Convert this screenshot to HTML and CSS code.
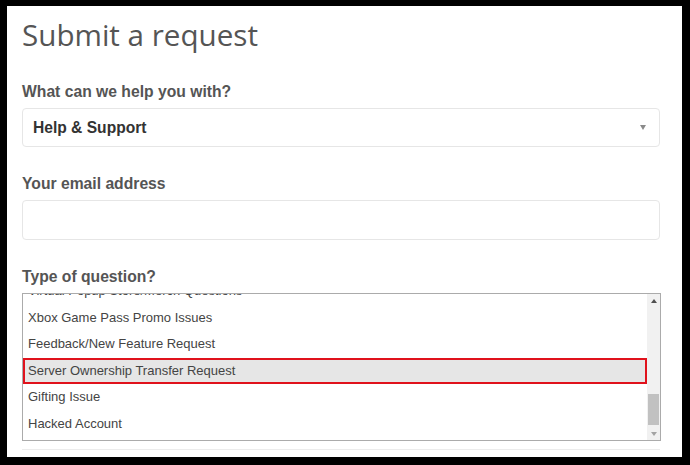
FILE: index.html
```html
<!DOCTYPE html>
<html lang="en">
<head>
<meta charset="utf-8">
<title>Submit a request</title>
<link rel="stylesheet" href="styles.css">
</head>
<body>
<div class="panel">
  <h1 class="title">Submit a request</h1>

  <div class="field">
    <div class="label">What can we help you with?</div>
    <div class="select">
      <span class="select-value">Help &amp; Support</span>
      <span class="caret"></span>
    </div>
  </div>

  <div class="field">
    <div class="label">Your email address</div>
    <div class="input"></div>
  </div>

  <div class="field field-last">
    <div class="label">Type of question?</div>
    <div class="listwrap">
      <div class="listbox">
        <div class="list">
          <div class="options">
            <div class="option">Virtual Popup Store/Merch Questions</div>
            <div class="option">Xbox Game Pass Promo Issues</div>
            <div class="option">Feedback/New Feature Request</div>
            <div class="option option-selected">Server Ownership Transfer Request</div>
            <div class="option">Gifting Issue</div>
            <div class="option">Hacked Account</div>
          </div>
        </div>
        <div class="scrollbar">
          <div class="sb-btn"><span class="sb-up"></span></div>
          <div class="sb-track"><div class="sb-thumb"></div></div>
          <div class="sb-btn"><span class="sb-down"></span></div>
        </div>
      </div>
    </div>
  </div>
</div>
</body>
</html>
```

FILE: styles.css
```css
html, body {
  margin: 0;
  padding: 0;
  background: #000;
}

.panel {
  background: #fff;
  margin: 6px 8px 8px 7px;
  height: 451px;
  box-sizing: border-box;
  padding: 9px 22px 0 15px;
  overflow: hidden;
}

.title {
  margin: 0 0 28px;
  font-family: "Open Sans", "Noto Sans", sans-serif;
  font-weight: 400;
  font-size: 29.6px;
  line-height: 40px;
  color: #555;
}

.field {
  margin-bottom: 28px;
}

.label {
  font-family: "Liberation Sans", Arial, sans-serif;
  font-weight: 700;
  font-size: 15.7px;
  line-height: 18px;
  color: #555;
  margin-bottom: 7px;
}

.select {
  height: 39px;
  box-sizing: border-box;
  border: 1px solid #e6e6e6;
  border-radius: 4px;
  display: flex;
  align-items: center;
  justify-content: space-between;
  padding: 0 13px 0 10px;
}

.select-value {
  font-family: "Liberation Sans", Arial, sans-serif;
  font-weight: 700;
  font-size: 15.6px;
  color: #333;
}

.caret {
  width: 0;
  height: 0;
  border-left: 3px solid transparent;
  border-right: 3px solid transparent;
  border-top: 5px solid #8a8a8a;
}

.input {
  height: 40px;
  box-sizing: border-box;
  border: 1px solid #e6e6e6;
  border-radius: 4px;
}

.listwrap {
  padding-bottom: 8px;
  border-bottom: 1px solid #ececec;
}

.listbox {
  height: 148px;
  box-sizing: border-box;
  border: 1px solid #ababab;
  display: flex;
  margin-right: -1px;
}

.list {
  flex: 1;
  overflow: hidden;
}

.options {
  margin-top: -15.75px;
}

.option {
  height: 26.5px;
  line-height: 26.5px;
  padding-left: 5px;
  font-family: "Liberation Sans", Arial, sans-serif;
  font-size: 13px;
  color: #444;
  white-space: nowrap;
}

.option-selected {
  background: #e6e6e6;
  outline: 2px solid #e0121c;
  outline-offset: -2px;
}

.scrollbar {
  width: 13px;
  background: #f1f1f1;
  display: flex;
  flex-direction: column;
}

.sb-btn {
  height: 13px;
  display: flex;
  align-items: center;
  justify-content: center;
}

.sb-up {
  width: 0;
  height: 0;
  border-left: 3.5px solid transparent;
  border-right: 3.5px solid transparent;
  border-bottom: 4px solid #505050;
}

.sb-down {
  width: 0;
  height: 0;
  border-left: 3.5px solid transparent;
  border-right: 3.5px solid transparent;
  border-top: 4px solid #a3a3a3;
}

.sb-track {
  flex: 1;
  display: flex;
  flex-direction: column;
  justify-content: flex-end;
  padding-bottom: 2px;
}

.sb-thumb {
  height: 31px;
  margin: 0 1px;
  background: #c1c1c1;
}
```
